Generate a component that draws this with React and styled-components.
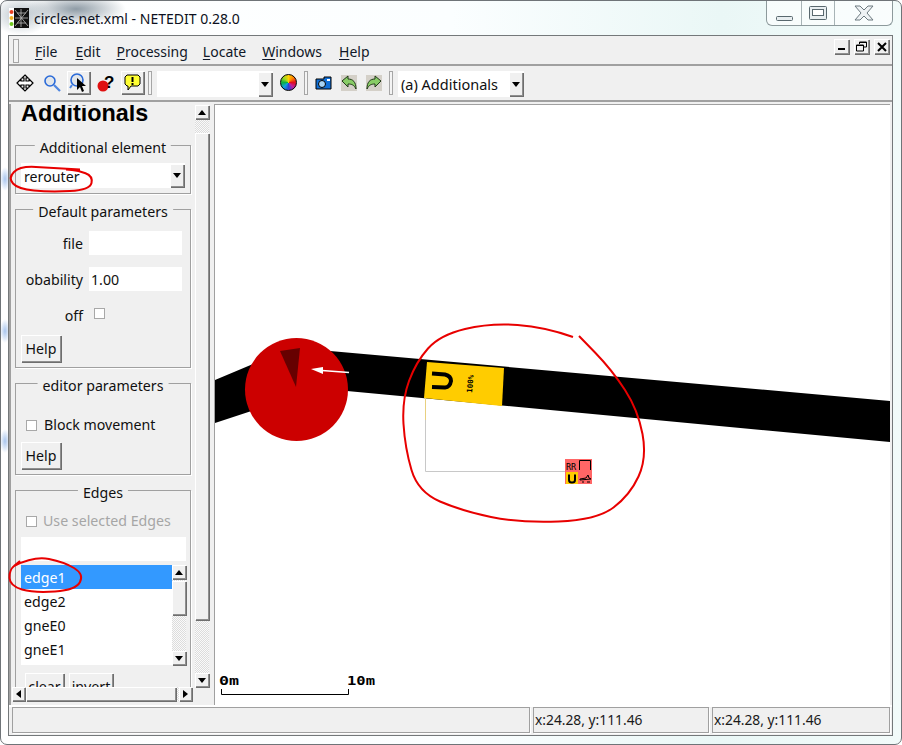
import React from "react";
import styled, { createGlobalStyle } from "styled-components";

const UI_FONT = `"Noto Sans", "Open Sans", sans-serif`;

const GlobalStyle = createGlobalStyle`
    * { box-sizing: border-box; }
    html, body { margin: 0; padding: 0; background: #fff; overflow: hidden; }
    body { font-family: ${UI_FONT}; font-size: 14.2px; color: #101010; }
`;

const raised = `
    background: #f0f0f0;
    box-shadow: inset 1px 1px 0 #fff, inset -1px -1px 0 #8f8f8f, 1px 1px 0 #6e6e6e;
`;

const dotted = `
    background-color: #f4f4f4;
    background-image: repeating-conic-gradient(#dcdcdc 0 25%, #fafafa 0 50%);
    background-size: 2px 2px;
`;

const Frame = styled.div`
    position: relative;
    width: 902px;
    height: 745px;
    display: flex;
    flex-direction: column;
    padding: 0 8px 8px 7px;
    border: 1px solid #6f7478;
    border-radius: 7px;
    background:
        radial-gradient(ellipse 50px 16px at 75px 8px, #8f9ca6, transparent),
        radial-gradient(ellipse 30px 20px at 20px 14px, #b5c0c8, transparent),
        radial-gradient(ellipse 5px 12px at 4px 178px, #a9c6ee, transparent),
        radial-gradient(ellipse 5px 12px at 4px 330px, #a9c6ee, transparent),
        radial-gradient(ellipse 5px 12px at 4px 440px, #a9c6ee, transparent),
        linear-gradient(90deg, #fff 0%, #fbfeff 50%, #eaf7f6 80%, #f2fbfa 100%);
`;

const TitleBar = styled.div`
    height: 34px;
    display: flex;
    align-items: flex-start;
    flex-shrink: 0;
`;

const AppIcon = styled.svg`
    width: 20px;
    height: 20px;
    margin: 7px 0 0 1px;
    flex-shrink: 0;
`;

const Title = styled.span`
    margin: 8px 0 0 5px;
    font-size: 14px;
    line-height: 20px;
    color: #0c1020;
`;

const WindowControls = styled.div`
    margin-left: auto;
    display: flex;
    height: 25px;
    border: 1px solid #8d9a9c;
    border-top: none;
    border-radius: 0 0 6px 6px;
    background: rgba(255, 255, 255, 0.6);
`;

const ControlCell = styled.div`
    width: ${(p) => p.$w}px;
    display: flex;
    align-items: center;
    justify-content: center;
    border-left: ${(p) => (p.$first ? "none" : "1px solid #a8b4b6")};
`;

const Inner = styled.div`
    flex: 1;
    display: flex;
    flex-direction: column;
    min-height: 0;
    background: #f0f0f0;
    border: 1px solid #74787a;
`;

const MenuBar = styled.div`
    height: 30px;
    display: flex;
    align-items: center;
    flex-shrink: 0;
    padding: 2px 0 0 4px;
    border-bottom: 2px solid #a0a0a0;
`;

const Grip = styled.div`
    width: ${(p) => p.$w || 6}px;
    height: ${(p) => p.$h || 24}px;
    border: 1px solid #a6a6a6;
    background: #f4f4f4;
    flex-shrink: 0;
`;

const MenuItem = styled.span`
    margin-left: ${(p) => p.$ml}px;
    font-size: 14px;
    color: #101828;

    u {
        text-underline-offset: 2px;
    }
`;

const MdiGroup = styled.div`
    align-self: flex-start;
    margin: 1px 3px 0 auto;
    display: flex;
    gap: 5px;
`;

const MdiButton = styled.div`
    ${raised}
    width: 15px;
    height: 15px;
    display: flex;
    align-items: center;
    justify-content: center;
`;

const ToolBar = styled.div`
    height: 36px;
    display: flex;
    align-items: flex-start;
    gap: 4px;
    flex-shrink: 0;
    padding: 5px 0 0 4px;
    border-bottom: 2px solid #a0a0a0;
`;

const Tool = styled.div`
    width: 23px;
    height: 23px;
    display: flex;
    align-items: center;
    justify-content: center;
    flex-shrink: 0;
    ${(p) => (p.$raised ? raised : "")}
`;

const ToolGroup = styled.div`
    display: flex;
    gap: 2px;
`;

const Combo = styled.div`
    width: ${(p) => p.$w}px;
    height: ${(p) => p.$h || 26}px;
    margin-left: ${(p) => p.$ml || 0}px;
    display: flex;
    align-items: stretch;
    flex-shrink: 0;
    background: #fff;
    border: 1px solid #fff;
    font-size: ${(p) => p.$fs || 14.2}px;
`;

const ComboText = styled.span`
    flex: 1;
    padding-left: 2px;
    line-height: ${(p) => p.$lh || 24}px;
    white-space: nowrap;
`;

const ComboArrow = styled.div`
    ${raised}
    width: 14px;
    display: flex;
    align-items: center;
    justify-content: center;
`;

const Triangle = styled.div`
    width: 0;
    height: 0;
    ${(p) => {
        const s = "border: 4px solid transparent;";
        if (p.$dir === "up") return `${s} border-top: none; border-bottom: 5px solid #000;`;
        if (p.$dir === "left") return `${s} border-left: none; border-right: 5px solid #000;`;
        if (p.$dir === "right") return `${s} border-right: none; border-left: 5px solid #000;`;
        return `${s} border-bottom: none; border-top: 5px solid #000;`;
    }}
`;

const ColorWheel = styled.div`
    width: 17px;
    height: 17px;
    border-radius: 50%;
    border: 1px solid #000;
    background: conic-gradient(#ffd000, #ff8000, #e01020, #c020a0, #3040d0, #10a0e0, #10b040, #a0d820, #ffd000);
`;

const Main = styled.div`
    flex: 1;
    display: flex;
    min-height: 0;
    padding: 2px 2px 0 0;
`;

const Sidebar = styled.div`
    width: 200px;
    display: flex;
    flex-direction: column;
    flex-shrink: 0;
    border-left: 2px solid #a0a0a0;
    padding-top: 1px;
`;

const SideBody = styled.div`
    height: 582px;
    display: flex;
    flex-shrink: 0;
`;

const Viewport = styled.div`
    flex: 1;
    overflow: hidden;
    padding-left: 4px;
`;

const PanelTitle = styled.h1`
    margin: -4px 0 20px 6px;
    font: bold 23.4px/24px "Liberation Sans", Arial, sans-serif;
    color: #000;
`;

const Group = styled.div`
    position: relative;
    width: 176px;
    height: ${(p) => p.$h}px;
    margin-bottom: 15px;
    border: 1px solid #a0a0a0;
    box-shadow: 1px 1px 0 #fff;
`;

const Legend = styled.span`
    position: absolute;
    top: -8px;
    left: 50%;
    transform: translateX(-50%);
    padding: 0 5px;
    background: #f0f0f0;
    line-height: 20px;
    white-space: nowrap;
`;

const GroupBody = styled.div`
    display: flex;
    flex-direction: column;
    padding: ${(p) => p.$pt}px 5px 0 5px;
`;

const FieldRow = styled.div`
    display: grid;
    grid-template-columns: 62px 93px;
    column-gap: 6px;
    align-items: center;
    height: 24px;
    margin-bottom: ${(p) => p.$mb || 0}px;
`;

const FieldLabel = styled.span`
    padding-top: 2px;
    text-align: right;
    line-height: 20px;
    white-space: nowrap;
`;

const TextBox = styled.div`
    height: 24px;
    background: #fff;
    padding-left: 2px;
    line-height: 26px;
`;

const CheckBox = styled.div`
    width: 11px;
    height: 11px;
    background: #fff;
    border: 1px solid #a8a8a8;
    flex-shrink: 0;
`;

const FieldCheck = styled(CheckBox)`
    margin: -4px 0 0 5px;
`;

const CheckRow = styled.div`
    display: flex;
    align-items: center;
    gap: ${(p) => (p.$muted ? 6 : 7)}px;
    height: 20px;
    padding-left: 5px;
    line-height: ${(p) => (p.$muted ? 18 : 20)}px;
    color: ${(p) => (p.$muted ? "#a6a6a6" : "#101010")};
`;

const PushButton = styled.div`
    ${raised}
    width: ${(p) => p.$w || 40}px;
    height: 27px;
    margin-top: ${(p) => p.$mt || 0}px;
    display: flex;
    align-items: center;
    justify-content: center;
    flex-shrink: 0;
`;

const EdgeSearch = styled.div`
    width: 165px;
    height: 24px;
    margin-top: 6px;
    background: #fff;
`;

const EdgeList = styled.div`
    width: 165px;
    height: 100px;
    margin-top: 4px;
    display: flex;
    background: #fff;
`;

const EdgeItems = styled.div`
    flex: 1;
`;

const EdgeItem = styled.div`
    height: 24px;
    padding-left: 3px;
    line-height: 26px;
    background: ${(p) => (p.$selected ? "#3399ff" : "transparent")};
    color: ${(p) => (p.$selected ? "#fff" : "#101010")};
`;

const ButtonRow = styled.div`
    display: flex;
    gap: 5px;
    margin: 8px 0 0 4px;
`;

const VScroll = styled.div`
    width: ${(p) => p.$w}px;
    display: flex;
    flex-direction: column;
    flex-shrink: 0;
    ${dotted}
`;

const HScroll = styled.div`
    height: 14px;
    width: 180px;
    margin-left: 1px;
    display: flex;
    flex-shrink: 0;
    ${dotted}
`;

const ScrollArrow = styled.div`
    ${raised}
    width: ${(p) => p.$w || 14}px;
    height: ${(p) => p.$h || 14}px;
    display: flex;
    align-items: center;
    justify-content: center;
    flex-shrink: 0;
`;

const ScrollThumb = styled.div`
    ${raised}
    flex: ${(p) => (p.$size ? `0 0 ${p.$size}px` : 1)};
    margin: ${(p) => p.$margin || 0};
`;

const ScrollGap = styled.div`
    flex: ${(p) => (p.$size ? `0 0 ${p.$size}px` : 1)};
`;

const CanvasPane = styled.div`
    flex: 1;
    min-width: 0;
    margin-left: 5px;
    background: #fff;
    border-left: 1px solid #a0a0a0;
    border-top: 1px solid #a0a0a0;
`;

const CanvasSvg = styled.svg`
    display: block;
    width: 100%;
    height: 100%;
`;

const StatusBar = styled.div`
    height: 30px;
    display: flex;
    gap: 3px;
    flex-shrink: 0;
    padding-left: 3px;
    border-top: 2px solid #fff;
`;

const StatusCell = styled.div`
    width: ${(p) => p.$w}px;
    height: 26px;
    padding-left: 1px;
    border: 1px solid #a0a0a0;
    box-shadow: 1px 1px 0 #fff;
    font-size: 13.8px;
    line-height: 24px;
    white-space: nowrap;
    color: #1a1a1a;
`;

const Annotations = styled.svg`
    position: absolute;
    top: -1px;
    left: -1px;
    width: 902px;
    height: 745px;
    pointer-events: none;
`;

const smooth = (pts) => {
    let d = `M${pts[0][0]} ${pts[0][1]}`;
    for (let i = 1; i < pts.length - 1; i++) {
        const mx = (pts[i][0] + pts[i + 1][0]) / 2;
        const my = (pts[i][1] + pts[i + 1][1]) / 2;
        d += ` Q${pts[i][0]} ${pts[i][1]} ${mx} ${my}`;
    }
    const last = pts[pts.length - 1];
    return `${d} L${last[0]} ${last[1]}`;
};

const BIG_RING = [
    [573, 337], [545, 327], [490, 323], [440, 335], [416, 362], [402, 400], [405, 448], [418, 492],
    [462, 511], [520, 523], [597, 520], [630, 495], [647, 458], [638, 410], [612, 370], [579, 336],
];
const ELEMENT_RING = [
    [80, 169.5], [52, 168], [20, 166], [8, 178], [18, 189], [50, 192], [90, 190], [93, 176], [78, 170.5], [66, 169.5],
];
const EDGE_RING = [
    [14, 566], [34, 556], [64, 562], [84, 574], [76, 590], [34, 593], [10, 586], [9, 570], [20, 561],
];

const MoveIcon = () => (
    <svg width="18" height="18" viewBox="0 0 18 18">
        <path
            d="M9 1l3 3h-2v3h3V5l4 4-4 4v-2h-3v3h2l-3 3-3-3h2v-3H5v2L1 9l4-4v2h3V4H6z"
            fill="#fff"
            stroke="#000"
            strokeWidth="1.2"
        />
    </svg>
);

const ZoomIcon = () => (
    <svg width="18" height="18" viewBox="0 0 18 18">
        <circle cx="7" cy="7" r="5" fill="#e2e6ea" stroke="#2a6ad8" strokeWidth="1.6" />
        <path d="M11 11l6 6" stroke="#4f86e0" strokeWidth="2.2" />
    </svg>
);

const LocateIcon = () => (
    <svg width="19" height="19" viewBox="0 0 19 19">
        <circle cx="8" cy="7" r="6" fill="#e2e6ea" stroke="#2a6ad8" strokeWidth="1.6" />
        <path d="M3 12l-2 3" stroke="#4f86e0" strokeWidth="2" />
        <path d="M8 5l9 8h-4l2 5-2 1-2-5-3 3z" fill="#000" />
    </svg>
);

const HelpIcon = () => (
    <svg width="18" height="18" viewBox="0 0 18 18">
        <circle cx="6" cy="12" r="5.5" fill="#e01010" />
        <text x="7" y="14" fontFamily="Liberation Sans" fontWeight="bold" fontSize="17" fill="#000">?</text>
    </svg>
);

const BubbleIcon = () => (
    <svg width="17" height="17" viewBox="0 0 17 17">
        <path d="M3 1h11l2 2v7l-2 2H7l-3 4v-4H3l-2-2V3z" fill="#ffff33" stroke="#000" />
        <path d="M8.5 3v5" stroke="#000" strokeWidth="2" />
        <path d="M8.5 9v2" stroke="#000" strokeWidth="2" />
    </svg>
);

const CameraIcon = () => (
    <svg width="17" height="14" viewBox="0 0 17 14">
        <path d="M1 3h8V1h7v12H1z" fill="#1070d8" stroke="#000" />
        <circle cx="7" cy="8" r="3.5" fill="#a8d4f4" stroke="#000" />
        <rect x="12" y="3" width="3" height="2" fill="#fff" />
    </svg>
);

const ArrowTile = ({ flip }) => (
    <svg width="16" height="16" viewBox="0 0 16 16" style={flip ? { transform: "scaleX(-1)" } : undefined}>
        <rect width="16" height="16" fill="#d4d0c8" />
        <path d="M1 6l6-5v3c5 0 8 3 8 10-2-4-4-5-8-5v3z" fill="#88cc66" stroke="#203818" />
    </svg>
);

const App = () => (
    <>
        <GlobalStyle />
        <Frame>
            <TitleBar>
                <AppIcon viewBox="0 0 20 20">
                    <rect x="5" width="15" height="20" fill="#111" />
                    <path d="M6 2l13 16M19 2L6 18M12 1v18M6 10h13M8 5l9 0M8 15h9" stroke="#bbb" strokeWidth="0.8" />
                    <rect x="0" width="5" height="20" fill="#fff" />
                    <circle cx="2.5" cy="4" r="2" fill="#e84020" />
                    <circle cx="2.5" cy="10" r="2" fill="#f0b020" />
                    <circle cx="2.5" cy="16" r="2" fill="#70c820" />
                </AppIcon>
                <Title>circles.net.xml - NETEDIT 0.28.0</Title>
                <WindowControls>
                    <ControlCell $w={34} $first>
                        <svg width="17" height="6" viewBox="0 0 17 6" style={{ marginTop: 11 }}>
                            <rect x="0.5" y="0.5" width="16" height="4" rx="1" fill="#e8eef0" stroke="#59686e" />
                        </svg>
                    </ControlCell>
                    <ControlCell $w={33}>
                        <svg width="18" height="14" viewBox="0 0 18 14">
                            <rect x="0.5" y="0.5" width="17" height="13" rx="1" fill="#e8eef0" stroke="#59686e" />
                            <rect x="3.5" y="3.5" width="11" height="6" fill="#fff" stroke="#59686e" />
                        </svg>
                    </ControlCell>
                    <ControlCell $w={58}>
                        <svg width="20" height="16" viewBox="0 0 20 16">
                            <path
                                d="M1 1h5l4 4 4-4h5l-6 7 6 7h-5l-4-4-4 4H1l6-7z"
                                fill="#eef2f4"
                                stroke="#6d7a80"
                            />
                        </svg>
                    </ControlCell>
                </WindowControls>
            </TitleBar>
            <Inner>
                <MenuBar>
                    <Grip $h={24} />
                    <MenuItem $ml={16}><u>F</u>ile</MenuItem>
                    <MenuItem $ml={18}><u>E</u>dit</MenuItem>
                    <MenuItem $ml={16}><u>P</u>rocessing</MenuItem>
                    <MenuItem $ml={15}><u>L</u>ocate</MenuItem>
                    <MenuItem $ml={16}><u>W</u>indows</MenuItem>
                    <MenuItem $ml={17}><u>H</u>elp</MenuItem>
                    <MdiGroup>
                        <MdiButton>
                            <svg width="9" height="9" viewBox="0 0 9 9"><rect x="1" y="6" width="7" height="2" /></svg>
                        </MdiButton>
                        <MdiButton>
                            <svg width="11" height="11" viewBox="0 0 11 11">
                                <path d="M3.5 3V1h7v5H8M.5 4h7v6h-7zM.5 4.5h7M3.5 1.5h7" fill="none" stroke="#000" />
                            </svg>
                        </MdiButton>
                        <MdiButton>
                            <svg width="10" height="10" viewBox="0 0 10 10">
                                <path d="M1 1l8 8M9 1l-8 8" stroke="#000" strokeWidth="2" />
                            </svg>
                        </MdiButton>
                    </MdiGroup>
                </MenuBar>
                <ToolBar>
                    <Tool><MoveIcon /></Tool>
                    <Tool><ZoomIcon /></Tool>
                    <Tool $raised><LocateIcon /></Tool>
                    <Tool><HelpIcon /></Tool>
                    <Tool $raised><BubbleIcon /></Tool>
                    <Grip $w={4} $h={24} />
                    <Combo $w={116} $ml={1}>
                        <ComboText />
                        <ComboArrow><Triangle /></ComboArrow>
                    </Combo>
                    <Tool><ColorWheel /></Tool>
                    <Grip $w={4} $h={24} />
                    <ToolGroup>
                        <Tool><CameraIcon /></Tool>
                        <Tool><ArrowTile /></Tool>
                        <Tool><ArrowTile flip /></Tool>
                    </ToolGroup>
                    <Grip $w={4} $h={24} />
                    <Combo $w={126} $ml={1} $fs={14.5}>
                        <ComboText>(a) Additionals</ComboText>
                        <ComboArrow><Triangle /></ComboArrow>
                    </Combo>
                </ToolBar>
                <Main>
                    <Sidebar>
                        <SideBody>
                            <Viewport>
                                <PanelTitle>Additionals</PanelTitle>
                                <Group $h={49}>
                                    <Legend>Additional element</Legend>
                                    <GroupBody $pt={17}>
                                        <Combo $w={164} $h={25}>
                                            <ComboText $lh={26}>rerouter</ComboText>
                                            <ComboArrow><Triangle /></ComboArrow>
                                        </Combo>
                                    </GroupBody>
                                </Group>
                                <Group $h={159}>
                                    <Legend>Default parameters</Legend>
                                    <GroupBody $pt={21}>
                                        <FieldRow $mb={12}>
                                            <FieldLabel>file</FieldLabel>
                                            <TextBox />
                                        </FieldRow>
                                        <FieldRow $mb={12}>
                                            <FieldLabel>obability</FieldLabel>
                                            <TextBox>1.00</TextBox>
                                        </FieldRow>
                                        <FieldRow $mb={8}>
                                            <FieldLabel>off</FieldLabel>
                                            <FieldCheck />
                                        </FieldRow>
                                        <PushButton>Help</PushButton>
                                    </GroupBody>
                                </Group>
                                <Group $h={92}>
                                    <Legend>editor parameters</Legend>
                                    <GroupBody $pt={31}>
                                        <CheckRow>
                                            <CheckBox />
                                            Block movement
                                        </CheckRow>
                                        <PushButton $mt={7}>Help</PushButton>
                                    </GroupBody>
                                </Group>
                                <Group $h={240}>
                                    <Legend>Edges</Legend>
                                    <GroupBody $pt={20}>
                                        <CheckRow $muted>
                                            <CheckBox />
                                            Use selected Edges
                                        </CheckRow>
                                        <EdgeSearch />
                                        <EdgeList>
                                            <EdgeItems>
                                                <EdgeItem $selected>edge1</EdgeItem>
                                                <EdgeItem>edge2</EdgeItem>
                                                <EdgeItem>gneE0</EdgeItem>
                                                <EdgeItem>gneE1</EdgeItem>
                                            </EdgeItems>
                                            <VScroll $w={14}>
                                                <ScrollArrow><Triangle $dir="up" /></ScrollArrow>
                                                <ScrollThumb $size={34} $margin="2px 0 0" />
                                                <ScrollGap />
                                                <ScrollArrow><Triangle /></ScrollArrow>
                                            </VScroll>
                                        </EdgeList>
                                        <ButtonRow>
                                            <PushButton $w={39}>clear</PushButton>
                                            <PushButton $w={44}>invert</PushButton>
                                        </ButtonRow>
                                    </GroupBody>
                                </Group>
                            </Viewport>
                            <VScroll $w={14}>
                                <ScrollArrow><Triangle $dir="up" /></ScrollArrow>
                                <ScrollGap $size={14} />
                                <ScrollThumb $size={487} />
                                <ScrollGap />
                                <ScrollArrow><Triangle /></ScrollArrow>
                            </VScroll>
                        </SideBody>
                        <HScroll>
                            <ScrollArrow $w={13}><Triangle $dir="left" /></ScrollArrow>
                            <ScrollThumb $size={150} $margin="0 0 0 1px" />
                            <ScrollGap />
                            <ScrollArrow $w={13}><Triangle $dir="right" /></ScrollArrow>
                        </HScroll>
                    </Sidebar>
                    <CanvasPane>
                        <CanvasSvg viewBox="215 105 675 600" preserveAspectRatio="none">
                            <polygon points="215,380 260,361 330,351 890,401 890,442 347,391 270,405 215,423" fill="#000" />
                            <polygon points="427,362 504,368 502,406 424,398" fill="#ffcc00" />
                            <path
                                d="M432 373.5L445 374.5Q451 376 451 381Q450 387 445 387.5L432 387"
                                fill="none"
                                stroke="#000"
                                strokeWidth="4"
                            />
                            <text
                                transform="translate(472 393) rotate(-85)"
                                fontFamily="DejaVu Sans Mono"
                                fontWeight="bold"
                                fontSize="7.5"
                                fill="#000"
                            >
                                100%
                            </text>
                            <path d="M425.5 398V471.5H566" fill="none" stroke="#c8c8c8" />
                            <path d="M425.5 398V420" fill="none" stroke="#e8d080" />
                            <circle cx="296.5" cy="389.5" r="51.5" fill="#cc0000" />
                            <polygon points="280,351 300,348 296,387" fill="#660000" />
                            <path d="M322 370.5L349 372.5" stroke="#fff" strokeWidth="1.6" />
                            <polygon points="311,369 323,367 323,374" fill="#fff" />
                            <rect x="565" y="459" width="27" height="25" fill="#ff6666" />
                            <rect x="566" y="472" width="12" height="12" fill="#ffcc00" />
                            <text x="566" y="470" fontFamily="DejaVu Sans Mono" fontSize="8.5" fill="#000">RR</text>
                            <path d="M579.5 470V460.5H590.5V470" fill="none" stroke="#000" />
                            <path d="M569 474.5V480Q569 482.5 572 482.5Q575 482.5 575 480V474.5" fill="none" stroke="#000" strokeWidth="2" />
                            <path d="M580 479l6-1 2-3 1 3 2 1-11 1zM582 482h2M587 482h3" fill="none" stroke="#000" />
                            <text x="219" y="685" fontFamily="DejaVu Sans Mono" fontWeight="bold" fontSize="13" textLength="20" lengthAdjust="spacingAndGlyphs" fill="#000">0m</text>
                            <text x="347" y="685" fontFamily="DejaVu Sans Mono" fontWeight="bold" fontSize="13" textLength="28" lengthAdjust="spacingAndGlyphs" fill="#000">10m</text>
                            <path d="M221.5 689V694.5H348.5V689" fill="none" stroke="#000" />
                            <path d={smooth(BIG_RING)} fill="none" stroke="#e80000" strokeWidth="2" />
                        </CanvasSvg>
                    </CanvasPane>
                </Main>
                <StatusBar>
                    <StatusCell $w={518} />
                    <StatusCell $w={176}>x:24.28, y:111.46</StatusCell>
                    <StatusCell $w={178}>x:24.28, y:111.46</StatusCell>
                </StatusBar>
            </Inner>
            <Annotations viewBox="0 0 902 745">
                <path d={smooth(ELEMENT_RING)} fill="none" stroke="#e80000" strokeWidth="2" />
                <path d={smooth(EDGE_RING)} fill="none" stroke="#e80000" strokeWidth="2" />
            </Annotations>
        </Frame>
    </>
);

export default App;
